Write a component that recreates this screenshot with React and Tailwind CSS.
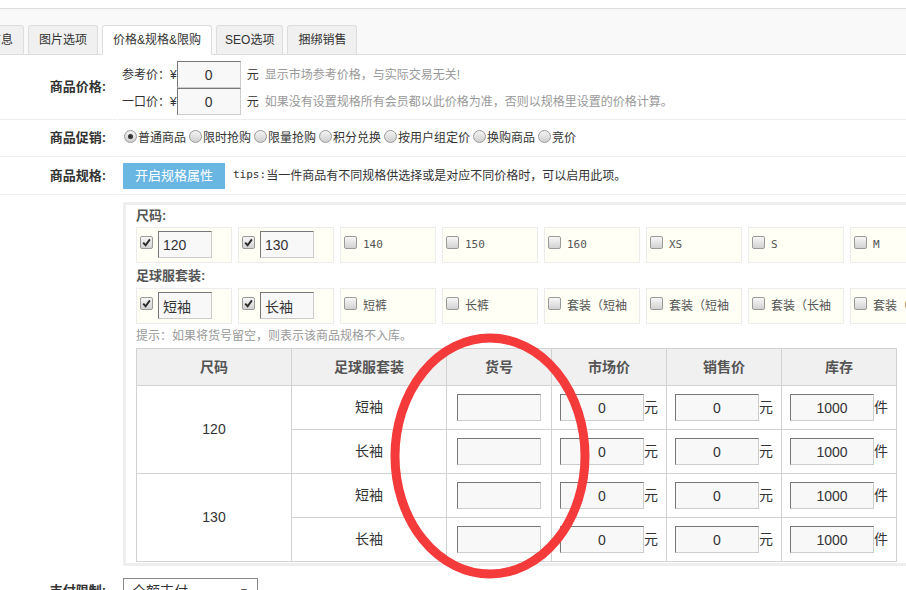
import React from 'react'

const tabs = [
  { label: '基本信息' },
  { label: '图片选项' },
  { label: '价格&规格&限购', active: true },
  { label: 'SEO选项', tight: true },
  { label: '捆绑销售' },
]

const promos = ['普通商品', '限时抢购', '限量抢购', '积分兑换', '按用户组定价', '换购商品', '竞价']

const sizes = [
  { label: '120', on: true },
  { label: '130', on: true },
  { label: '140' },
  { label: '150' },
  { label: '160' },
  { label: 'XS' },
  { label: 'S' },
  { label: 'M' },
]

const suits = [
  { label: '短袖', on: true },
  { label: '长袖', on: true },
  { label: '短裤' },
  { label: '长裤' },
  { label: '套装（短袖' },
  { label: '套装（短袖' },
  { label: '套装（长袖' },
  { label: '套装（长袖' },
]

const rows = [
  { size: '120', suit: '短袖', span: true },
  { size: '120', suit: '长袖' },
  { size: '130', suit: '短袖', span: true },
  { size: '130', suit: '长袖' },
]

function Field({ value = '', className = '' }) {
  return (
    <input
      readOnly
      value={value}
      className={`h-[27px] border border-t-[#777] border-l-[#777] border-r-[#ccc] border-b-[#ccc] bg-[#f8f8f8] text-center text-[14px] text-[#333] outline-none font-['Liberation_Sans','Noto_Sans_CJK_SC',sans-serif] ${className}`}
    />
  )
}

function Check({ on }) {
  return (
    <span className="w-[13px] h-[13px] shrink-0 rounded-[2px] border border-[#9a9a9a] bg-linear-to-b from-[#f7f7f7] to-[#d2d2d2] flex items-center justify-center">
      {on && (
        <svg width="9" height="9" viewBox="0 0 9 9">
          <path d="M1.2 4.6 L3.6 7.2 L7.9 1.4" stroke="#2a2a2a" strokeWidth="1.9" fill="none" />
        </svg>
      )}
    </span>
  )
}

function Radio({ on }) {
  return (
    <span className="w-[13px] h-[13px] shrink-0 rounded-full border border-[#9a9a9a] bg-linear-to-b from-[#f4f4f4] to-[#cfcfcf] flex items-center justify-center -mt-[4px]">
      {on && <span className="w-[5px] h-[5px] rounded-full bg-[#333]" />}
    </span>
  )
}

function SpecItem({ label, on }) {
  const mono = /^[0-9A-Z]+$/.test(label)
  return (
    <div className="w-[96px] h-[36px] shrink-0 border border-[#ececec] bg-[#fffff5] flex items-start pl-[3px] pt-[3px] overflow-hidden">
      <span className="mt-[5px]">
        <Check on={on} />
      </span>
      {on ? (
        <Field value={label} className="w-[54px] ml-[5px] text-left pl-[4px]" />
      ) : mono ? (
        <span className="ml-[6px] mt-[7px] text-[11px] leading-[14px] text-[#555] font-['DejaVu_Sans_Mono',monospace] whitespace-nowrap">
          {label}
        </span>
      ) : (
        <span className="ml-[6px] mt-[6px] text-[12px] leading-[16px] text-[#555] whitespace-nowrap">{label}</span>
      )}
    </div>
  )
}

export default function App() {
  return (
    <div className="relative w-[906px] h-[590px] overflow-hidden bg-white text-[12px] text-[#333] font-['Liberation_Sans','Noto_Sans_CJK_SC',sans-serif]">
      <div className="h-[8px]" />

      {/* tabs */}
      <div className="h-[47px] border-t border-b border-[#dedede] bg-[#f9f9f9] flex items-end">
        <div className="flex items-end gap-[4px] -ml-[46px]">
          {tabs.map(t => (
            <div
              key={t.label}
              className={
                t.active
                  ? 'h-[30px] -mb-px px-[10px] flex items-center border border-[#ddd] border-b-white bg-white rounded-t-[3px] whitespace-nowrap'
                  : t.tight
                  ? 'h-[29px] px-[8px] flex items-center border border-b-0 border-[#ddd] bg-[#f0f0f0] rounded-t-[3px] whitespace-nowrap'
                  : 'h-[29px] px-[10px] flex items-center border border-b-0 border-[#ddd] bg-[#f0f0f0] rounded-t-[3px] whitespace-nowrap'
              }
            >
              {t.label}
            </div>
          ))}
        </div>
      </div>

      {/* 商品价格 */}
      <div className="flex">
        <div className="w-[117px] shrink-0 border-b border-[#eee] flex items-center justify-end pr-[11px] text-[13px] font-bold">
          商品价格:
        </div>
        <div className="flex-1 ml-px border-b border-[#eee] pl-[4px] pt-[6px] pb-[4px]">
          <div className="h-[27px] flex items-center whitespace-nowrap">
            <span>参考价：¥</span>
            <Field value="0" className="w-[64px]" />
            <span className="ml-[6px]">元</span>
            <span className="ml-[6px] text-[#999]">显示市场参考价格，与实际交易无关!</span>
          </div>
          <div className="h-[27px] flex items-center whitespace-nowrap">
            <span>一口价：¥</span>
            <Field value="0" className="w-[64px]" />
            <span className="ml-[6px]">元</span>
            <span className="ml-[6px] text-[#999]">如果没有设置规格所有会员都以此价格为准，否则以规格里设置的价格计算。</span>
          </div>
        </div>
      </div>

      {/* 商品促销 */}
      <div className="flex h-[37px]">
        <div className="w-[117px] shrink-0 border-b border-[#eee] flex items-center justify-end pr-[11px] text-[13px] font-bold">
          商品促销:
        </div>
        <div className="flex-1 ml-px border-b border-[#eee] pl-[6px] flex items-center whitespace-nowrap">
          {promos.map((p, i) => (
            <span key={p} className="flex items-center mr-[3px]">
              <Radio on={i === 0} />
              <span className="ml-px text-[12px]">{p}</span>
            </span>
          ))}
        </div>
      </div>

      {/* 商品规格 */}
      <div className="flex h-[38px]">
        <div className="w-[117px] shrink-0 border-b border-[#eee] flex items-center justify-end pr-[11px] text-[13px] font-bold">
          商品规格:
        </div>
        <div className="flex-1 ml-px border-b border-[#eee] pl-[5px] flex items-center whitespace-nowrap">
          <span className="w-[102px] h-[26px] bg-[#69b6e3] text-white text-[13px] flex items-center justify-center">
            开启规格属性
          </span>
          <span className="ml-[8px] text-[11px] font-['DejaVu_Sans_Mono',monospace]">tips:</span>
          <span>当一件商品有不同规格供选择或是对应不同价格时，可以启用此项。</span>
        </div>
      </div>

      {/* spec panel */}
      <div className="flex">
        <div className="w-[117px] shrink-0" />
        <div className="flex-1 ml-px pl-[5px] pt-[7px]">
          <div className="w-max border-[3px] border-[#eee] pl-[10px] pb-px">
            <div className="h-[22px] leading-[22px] text-[13px] font-bold text-[#555]">尺码:</div>
            <div className="flex gap-[6px]">
              {sizes.map(s => (
                <SpecItem key={s.label} {...s} />
              ))}
            </div>
            <div className="h-[25px] leading-[25px] text-[13px] font-bold text-[#555]">足球服套装:</div>
            <div className="flex gap-[6px]">
              {suits.map((s, i) => (
                <SpecItem key={i} {...s} />
              ))}
            </div>
            <div className="h-[24px] leading-[24px] text-[#999]">提示：如果将货号留空，则表示该商品规格不入库。</div>
            <table className="w-[760px] table-fixed border-collapse text-[14px]">
              <colgroup>
                <col className="w-[155px]" />
                <col className="w-[155px]" />
                <col className="w-[105px]" />
                <col className="w-[115px]" />
                <col className="w-[115px]" />
                <col className="w-[115px]" />
              </colgroup>
              <thead>
                <tr className="h-[37px] bg-[#f0f0f0] text-[#555]">
                  {['尺码', '足球服套装', '货号', '市场价', '销售价', '库存'].map(h => (
                    <th key={h} className="border border-[#d2d2d2] font-bold">
                      {h}
                    </th>
                  ))}
                </tr>
              </thead>
              <tbody>
                {rows.map((r, i) => (
                  <tr key={i} className="h-[44px]">
                    {r.span && (
                      <td rowSpan={2} className="border border-[#d2d2d2] text-center">
                        {r.size}
                      </td>
                    )}
                    <td className="border border-[#d2d2d2] text-center">{r.suit}</td>
                    <td className="border border-[#d2d2d2]">
                      <div className="flex justify-center">
                        <Field className="w-[84px]" />
                      </div>
                    </td>
                    <td className="border border-[#d2d2d2]">
                      <div className="flex justify-center items-center">
                        <Field value="0" className="w-[84px]" />
                        <span>元</span>
                      </div>
                    </td>
                    <td className="border border-[#d2d2d2]">
                      <div className="flex justify-center items-center">
                        <Field value="0" className="w-[84px]" />
                        <span>元</span>
                      </div>
                    </td>
                    <td className="border border-[#d2d2d2]">
                      <div className="flex justify-center items-center">
                        <Field value="1000" className="w-[84px]" />
                        <span>件</span>
                      </div>
                    </td>
                  </tr>
                ))}
              </tbody>
            </table>
          </div>
        </div>
      </div>

      {/* 支付限制 */}
      <div className="flex mt-[12px]">
        <div className="w-[117px] shrink-0 flex items-center justify-end pr-[11px] text-[13px] font-bold h-[26px]">
          支付限制:
        </div>
        <div className="flex-1 ml-px pl-[5px]">
          <div className="w-[135px] h-[26px] border border-[#888] flex items-center justify-between px-[8px] text-[14px]">
            <span>全额支付</span>
            <span className="text-[10px]">▼</span>
          </div>
        </div>
      </div>

      {/* red annotation */}
      <svg className="absolute inset-0 pointer-events-none" width="906" height="590" viewBox="0 0 906 590">
        <ellipse cx="490" cy="456" rx="95" ry="118" fill="none" stroke="#f43a3a" strokeWidth="9" />
      </svg>
    </div>
  )
}
